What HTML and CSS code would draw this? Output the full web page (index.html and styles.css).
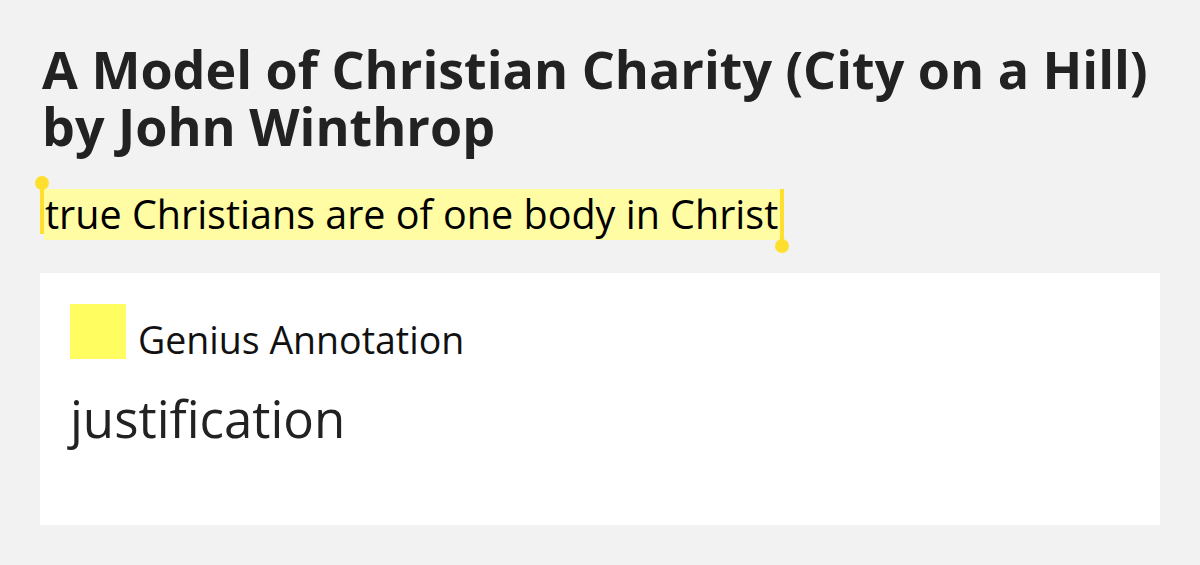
FILE: index.html
```html
<!DOCTYPE html>
<html>
<head>
	<meta charset="UTF-8">
	<title>A Model of Christian Charity (City on a Hill) by John Winthrop</title>
	<link rel="stylesheet" href="styles.css">
</head>
<body>
	<div id="wrap">
		<h1 class="title">A Model of Christian Charity (City on a Hill) by John Winthrop</h1>
		<div class="quote">
			<span class="handle start"></span><span class="fragment">true Christians are of one body in Christ</span><span class="handle end"></span>
		</div>
		<div class="card">
			<div class="label">
				<span class="badge"></span>
				<span class="label-text">Genius Annotation</span>
			</div>
			<div class="body">justification</div>
		</div>
	</div>
</body>
</html>
```

FILE: styles.css
```css
*{margin:0;padding:0;}
body{
	background:#f2f2f2;
	font-family:"Open Sans","Liberation Sans",sans-serif;
	color:#222;
	font-variant-ligatures:none;
}
#wrap{
	padding:40px 40px 0 40px;
}
.title{
	font-size:52px;
	font-weight:700;
	line-height:57px;
	color:#222;
	padding-left:2px;
}
.quote{
	margin-top:35px;
	display:flex;
	align-items:stretch;
	height:51px;
}
.fragment{
	background:#fffca4;
	color:#000;
	font-size:39.5px;
	line-height:51px;
	padding:0 2px 0 1px;
	white-space:nowrap;
}
.handle{
	position:relative;
	width:4px;
	background:#ffdf2e;
}
.handle:after{
	content:"";
	position:absolute;
	left:-5px;
	width:14px;
	height:14px;
	border-radius:50%;
	background:#ffdf2e;
}
.handle.start{
	margin-top:-6px;
	margin-bottom:6px;
}
.handle.start:after{top:-7px;}
.handle.end{
	margin-bottom:-6px;
}
.handle.end:after{bottom:-7px;}
.card{
	margin-top:33px;
	background:#fff;
	height:252px;
	padding:31px 30px 0 30px;
	box-sizing:border-box;
}
.label{
	display:flex;
	align-items:flex-start;
}
.badge{
	width:56px;
	height:55px;
	background:#fffd5f;
}
.label-text{
	font-size:37.5px;
	line-height:56px;
	color:#111;
	margin-left:12px;
	margin-top:8px;
}
.body{
	margin-top:15px;
	font-size:51px;
	font-weight:400;
	color:#222;
}
```
